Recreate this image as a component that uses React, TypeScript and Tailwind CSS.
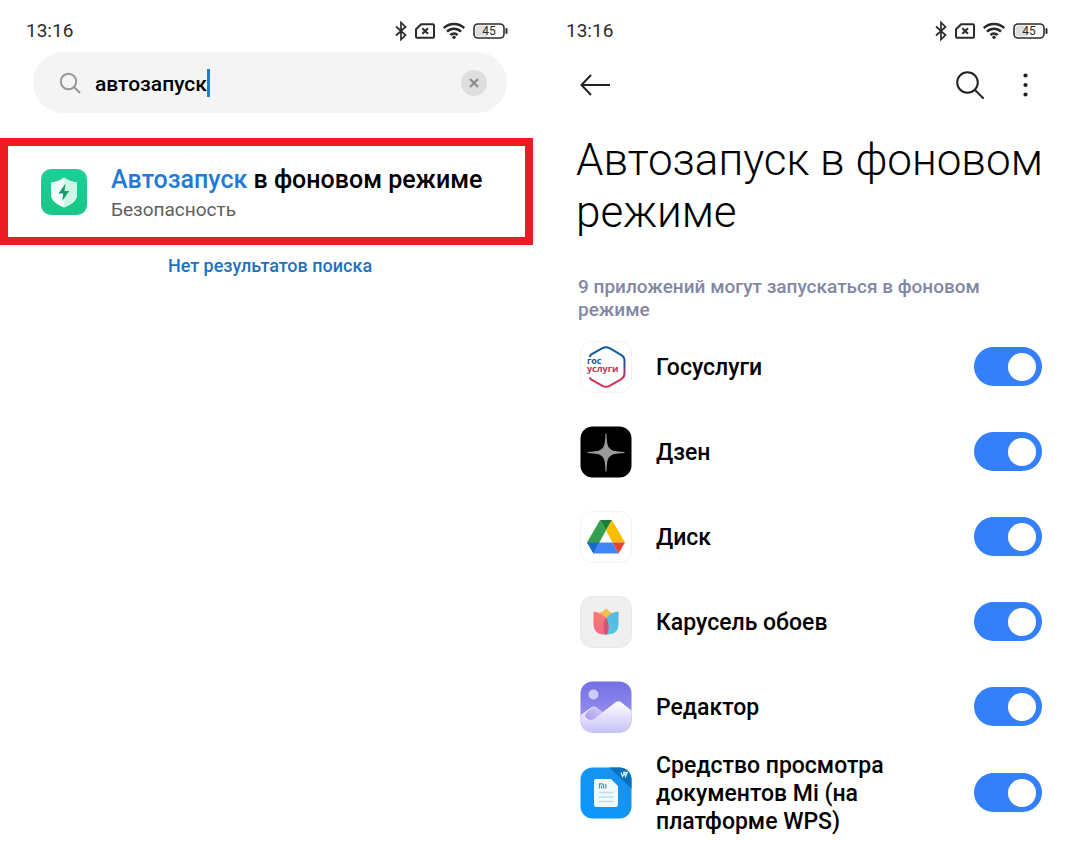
import React, { useState } from "react";

const StatusBar = () => (
  <div className="flex h-[52px] items-center justify-between pl-[26px] pr-8 pt-[9px] text-[#2b2b2b]">
    <span className="text-[19px] leading-6">13:16</span>
    <div className="flex items-center gap-2">
      <svg className="h-5 w-3" viewBox="0 0 12 20" fill="none" stroke="currentColor" strokeWidth="1.7">
        <path d="M1 5.5 10.5 14 6 18.5V1.5L10.5 6 1 14.5" />
      </svg>
      <svg className="h-4 w-5" viewBox="0 0 20 16" fill="none" stroke="currentColor" strokeWidth="2">
        <path d="M6.2 1.2H18a1 1 0 0 1 1 1v11.6a1 1 0 0 1-1 1H2a1 1 0 0 1-1-1V6.3z" strokeLinejoin="round" />
        <path d="m7.4 5.2 5.6 5.6m0-5.6-5.6 5.6" />
      </svg>
      <svg className="h-[17px] w-[22px]" viewBox="1 0 22 17" fill="none" stroke="currentColor" strokeWidth="2.5">
        <path d="M1.8 6a14.800 14.800 0 0 1 20.400 0M5 9.600a10 10 0 0 1 14 0M8.400 13a5.300 5.300 0 0 1 7.200 0" />
        <circle cx="12" cy="15.200" r="1.700" fill="currentColor" stroke="none" />
      </svg>
      <svg className="h-4 w-[35px]" viewBox="0 0 35 16">
        <rect x="1" y="1" width="30" height="14" rx="4" fill="#fff" stroke="currentColor" strokeWidth="1.6" />
        <path d="M5 2.500h9v11H5A2.500 2.500 0 0 1 2.500 11V5A2.500 2.500 0 0 1 5 2.500z" fill="#dedede" />
        <path d="M33.500 6v4" stroke="currentColor" strokeWidth="2" strokeLinecap="round" />
        <text x="16" y="12.200" textAnchor="middle" fontSize="12" fill="currentColor">
          45
        </text>
      </svg>
    </div>
  </div>
);

const SecurityIcon = () => (
  <svg className="size-[46px] shrink-0" viewBox="0 0 46 46">
    <defs>
      <linearGradient id="security" x1="0" y1="0" x2="0" y2="1">
        <stop offset="0" stopColor="#1cd09a" />
        <stop offset="1" stopColor="#19c586" />
      </linearGradient>
    </defs>
    <rect width="46" height="46" rx="10" fill="url(#security)" />
    <path d="M23 8.500c3.500 2.600 7.800 4.300 13 5v12c0 6-5 9.700-13 13-8-3.300-13-7-13-13v-12c5.200-.7 9.500-2.400 13-5z" fill="#f2fffa" />
    <path d="M23 8.500c3.500 2.600 7.800 4.300 13 5v12c0 6-5 9.700-13 13z" fill="#cdf7e6" />
    <path d="m24.500 14.500-7 10h4.700l-1 7.500 7-10h-4.700z" fill="#169b6b" />
  </svg>
);

const GosuslugiIcon = () => (
  <svg className="size-[52px]" viewBox="0 0 52 52">
    <defs>
      <linearGradient id="gos" x1="0" y1="0" x2="0" y2="1">
        <stop offset="0" stopColor="#0b5c9c" />
        <stop offset=".4" stopColor="#25549a" />
        <stop offset=".7" stopColor="#c0365b" />
        <stop offset="1" stopColor="#d5304f" />
      </linearGradient>
    </defs>
    <rect x=".5" y=".5" width="51" height="51" rx="12" fill="#fff" stroke="#f2f2f2" />
    <path
      d="M9.500 16 11 13.500 22.500 7.200q3.500-2 7 0L41 13.800q3.500 2 3.500 5.500v13.500q0 3.500-3.500 5.500l-11.500 6.500q-3.500 2-7 0L11 38.500 9.500 36.500"
      fill="none"
      stroke="url(#gos)"
      strokeWidth="2"
    />
    <text fontFamily="Open Sans, sans-serif" fontSize="9" fontWeight="700">
      <tspan x="7" y="23" fill="#15599b">гос</tspan>
      <tspan x="7" y="31" fill="#bd3559">услуги</tspan>
    </text>
  </svg>
);

const ZenIcon = () => (
  <svg className="size-[52px]" viewBox="0 0 52 52">
    <rect x=".5" y=".5" width="51" height="51" rx="12" fill="#000" />
    <path
      d="M25.500 7.500h1c.4 11.500 1.400 13.400 4 15.500 2.200 1.800 5 2.600 14 3v1c-9 .4-11.800 1.200-14 3-2.600 2.100-3.600 4-4 15.500h-1c-.4-11.500-1.400-13.400-4-15.500-2.200-1.800-5-2.600-14-3v-1c9-.4 11.800-1.200 14-3 2.600-2.100 3.600-4 4-15.500z"
      fill="#9b9b9b"
    />
  </svg>
);

const DriveIcon = () => (
  <svg className="size-[52px]" viewBox="0 0 52 52">
    <rect x=".5" y=".5" width="51" height="51" rx="12" fill="#fff" stroke="#f2f2f2" />
    <path d="M20 9 26 19.300 13.500 42.500 7 31.500z" fill="#34a04f" />
    <path d="M20 9h12l-6 10.300z" fill="#188038" />
    <path d="M32 9 45 31.500H32.500L26 19.300z" fill="#fbbc04" />
    <path d="M7 31.500h12.500l-6 11z" fill="#1967d2" />
    <path d="M19.500 31.500h13l6 11h-25z" fill="#4285f4" />
    <path d="M32.500 31.500H45l-6.500 11z" fill="#ea4335" />
  </svg>
);

const CarouselIcon = () => (
  <svg className="size-[52px]" viewBox="0 0 52 52">
    <defs>
      <linearGradient id="petalRed" x1="0" y1="0" x2="0" y2="1">
        <stop offset="0" stopColor="#f57e70" />
        <stop offset="1" stopColor="#f26886" />
      </linearGradient>
      <linearGradient id="petalBlue" x1="1" y1="0" x2="0" y2="1">
        <stop offset="0" stopColor="#53b5e4" />
        <stop offset="1" stopColor="#58cbe3" />
      </linearGradient>
    </defs>
    <rect x=".5" y=".5" width="51" height="51" rx="12" fill="#efefef" stroke="#e8e8e8" />
    <path d="M19 17c3-.8 5-2.500 7-4.800 2 2.300 4 4 7 4.800l-7 10z" fill="#f7bd4f" />
    <path d="M38.500 15.500c-8 .8-14.500 6-15 14-.2 4 .5 6.800 1.500 9h3c6.500 0 10.500-4 10.500-10.500z" fill="url(#petalBlue)" />
    <path d="M13.500 15.500c8 .8 14.500 6 15 14 .2 4-.5 6.800-1.500 9h-3c-6.500 0-10.500-4-10.500-10.500z" fill="url(#petalRed)" />
    <path d="M26 21.500c1.700 2.500 2.400 5 2.500 8 .2 4-.5 6.800-1.500 9h-2c-1-2.200-1.700-5-1.500-9 .1-3 .8-5.500 2.500-8z" fill="#cc5878" />
  </svg>
);

const EditorIcon = () => (
  <svg className="size-[52px]" viewBox="0 0 52 52">
    <defs>
      <linearGradient id="sky" x1="0" y1="0" x2="0" y2="1">
        <stop offset="0" stopColor="#7470e4" />
        <stop offset="1" stopColor="#a69bf5" />
      </linearGradient>
      <linearGradient id="snow" x1="0" y1="0" x2="0" y2="1">
        <stop offset="0" stopColor="#fff" />
        <stop offset="1" stopColor="#c6c1f8" />
      </linearGradient>
      <linearGradient id="hill" x1="1" y1="0" x2="0" y2="1">
        <stop offset="0" stopColor="#d9d2fb" />
        <stop offset="1" stopColor="#a496ed" />
      </linearGradient>
      <clipPath id="editorClip">
        <rect x=".5" y=".5" width="51" height="51" rx="12" />
      </clipPath>
    </defs>
    <g clipPath="url(#editorClip)">
      <path d="M0 0h52v52H0z" fill="url(#sky)" />
      <circle cx="13.500" cy="13.500" r="5" fill="#cfcbff" />
      <path d="M0 34.500 12 26q2-1.300 4 .2l6.500 5L36 21q2.500-1.700 5 0l11 9v22H0z" fill="url(#snow)" />
      <path d="M5.500 36q-1-2.500 1.500-5l5-4.300q2-1.500 4 0l6.500 4.800-7.500 6q-6 3.500-9.500-1.500z" fill="url(#hill)" />
    </g>
  </svg>
);

const DocsIcon = () => (
  <svg className="size-[52px]" viewBox="0 0 52 52">
    <defs>
      <linearGradient id="docs" x1="1" y1="0" x2="0" y2="1">
        <stop offset="0" stopColor="#1a90ea" />
        <stop offset="1" stopColor="#0b98ff" />
      </linearGradient>
      <clipPath id="docsClip">
        <rect x=".5" y=".5" width="51" height="51" rx="12" />
      </clipPath>
    </defs>
    <g clipPath="url(#docsClip)">
      <path d="M0 0h52v52H0z" fill="url(#docs)" />
      <path d="M29 0h23v22z" fill="#0a6fbd" />
    </g>
    <path d="m41 5.500 1.500 4 2-3.500 1 3.500 1.700-4H43" fill="none" stroke="#c9ecff" strokeWidth="1.300" />
    <path d="M16 12h15l7 7v18.500a2.500 2.500 0 0 1-2.500 2.500h-19a2.500 2.500 0 0 1-2.500-2.500V14a2 2 0 0 1 2-2z" fill="#f1faff" />
    <path d="M19.500 21.500v-4.700h2.700q1.500 0 1.500 1.500v3.200m-2.100-3v3m4.200-4.700v4.700" fill="none" stroke="#2ba0ee" strokeWidth="1.200" />
    <path d="M19 25.500h14.500M19 30h14.500M19 34.500h14.500" stroke="#bfdcf0" strokeWidth="1.600" />
  </svg>
);

const apps = [
  { name: "Госуслуги", icon: <GosuslugiIcon /> },
  { name: "Дзен", icon: <ZenIcon /> },
  { name: "Диск", icon: <DriveIcon /> },
  { name: "Карусель обоев", icon: <CarouselIcon /> },
  { name: "Редактор", icon: <EditorIcon /> },
  { name: "Средство просмотра документов Mi (на платформе WPS)", icon: <DocsIcon /> },
];

const SearchScreen = () => {
  const [query, setQuery] = useState("автозапуск");

  return (
    <section className="min-w-0 flex-1">
      <StatusBar />

      <div className="mx-[33px] flex h-[61px] items-center rounded-full bg-[#f4f4f4] pl-[26px] pr-5">
        <svg className="mr-[14px] size-[22px] shrink-0" viewBox="0 0 22 22" fill="none" stroke="#979797" strokeWidth="2">
          <circle cx="9.500" cy="9.500" r="7.700" />
          <path d="m15 15 6 6" />
        </svg>
        <input
          type="text"
          aria-label="Поиск"
          value={query}
          onChange={(e) => setQuery(e.target.value)}
          className="field-sizing-content pt-0.5 text-[21px] leading-7 font-medium text-black outline-none"
        />
        <span className="h-7 w-[3px] bg-[#1f7bd8]" />
        <button
          aria-label="Очистить"
          onClick={() => setQuery("")}
          className="ml-auto flex size-[26px] items-center justify-center rounded-full bg-[#dedede]"
        >
          <svg className="size-[10px]" viewBox="0 0 10 10" stroke="#8b8b8b" strokeWidth="2.200">
            <path d="m1 1 8 8m0-8-8 8" />
          </svg>
        </button>
      </div>

      <a href="#autostart" className="mt-[25px] mr-[7px] flex h-[107px] items-center gap-6 border-8 border-[#eb1c24] pl-[33px]">
        <SecurityIcon />
        <div className="pt-1">
          <p className="text-[25px] leading-8 font-medium whitespace-nowrap text-black">
            <span className="text-[#1f7bd8]">Автозапуск</span> в фоновом режиме
          </p>
          <p className="text-[19px] leading-7 text-[#5f5f5f]">Безопасность</p>
        </div>
      </a>

      <p className="mt-[9px] text-center text-lg leading-6 font-medium text-[#1c72bd]">Нет результатов поиска</p>
    </section>
  );
};

const AutostartScreen = () => (
  <section className="min-w-0 flex-1">
    <StatusBar />

    <header className="flex h-[66px] items-center pl-10 pr-[52px] text-[#222]">
      <button aria-label="Назад">
        <svg className="h-[22px] w-[30px]" viewBox="0 0 30 22" fill="none" stroke="currentColor" strokeWidth="2">
          <path d="M11 1 1.500 11 11 21M1.500 11H30" />
        </svg>
      </button>
      <button aria-label="Поиск" className="mr-[39px] ml-auto">
        <svg className="size-7" viewBox="0 0 28 28" fill="none" stroke="currentColor" strokeWidth="2">
          <circle cx="11.500" cy="11.500" r="10.300" />
          <path d="m19 19 8 8" strokeLinecap="round" />
        </svg>
      </button>
      <button aria-label="Ещё">
        <svg className="h-6 w-[5px]" viewBox="0 0 5 24" fill="currentColor">
          <circle cx="2.500" cy="2.500" r="2.100" />
          <circle cx="2.500" cy="12" r="2.100" />
          <circle cx="2.500" cy="21.500" r="2.100" />
        </svg>
      </button>
    </header>

    <h1 className="mt-4 pr-8 pl-9 text-[44px] leading-[52px] font-light text-black">Автозапуск в фоновом режиме</h1>

    <p className="mt-[37px] pr-10 pl-[38px] text-[19px] leading-[23px] font-medium text-[#8288a4]">
      9 приложений могут запускаться в фоновом режиме
    </p>

    <ul className="mt-[3px]">
      {apps.map((app, i) => (
        <li key={app.name} className="flex min-h-[85px] items-center pr-[38px] pl-10">
          <div className="shrink-0">{app.icon}</div>
          <label htmlFor={`app-${i}`} className="ml-6 w-[260px] pt-[3px] text-[23px] leading-[28px] font-medium text-black">
            {app.name}
          </label>
          <input
            id={`app-${i}`}
            type="checkbox"
            role="switch"
            defaultChecked
            className="ml-auto flex h-[39px] w-[68px] shrink-0 appearance-none items-center rounded-full bg-gray-300 px-[6px] after:size-7 after:rounded-full after:bg-white checked:justify-end checked:bg-[#3480fa]"
          />
        </li>
      ))}
    </ul>
  </section>
);

const App = () => {
  return (
    <main className="flex overflow-hidden bg-white font-[Roboto,sans-serif]">
      <SearchScreen />
      <AutostartScreen />
    </main>
  );
};

export default App;
